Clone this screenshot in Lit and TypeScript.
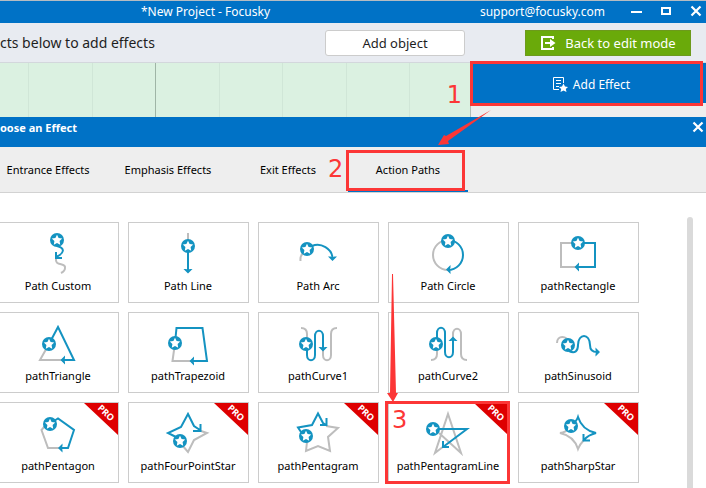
import { LitElement, html, css, svg, TemplateResult, SVGTemplateResult } from "lit";
import { customElement, property } from "lit/decorators.js";
import { classMap } from "lit/directives/class-map.js";

interface Effect {
  name: string;
  rest: string; // part of the path not yet travelled
  move: string; // travelled part of the path
  head: string; // arrow head
  star: [number, number];
  pro?: boolean;
}

const down = (x: number, y: number) => `M${x} ${y}l-4.5-4.5h2.5l2 .8 2-.8h2.5z`;
const left = (x: number, y: number) => `M${x} ${y}l4.5-4.5v2.5l-.8 2 .8 2v2.5z`;
const up = (x: number, y: number) => `M${x} ${y}l-4.5 4.5h2.5l2-.8 2 .8h2.5z`;
const right = (x: number, y: number) => `M${x} ${y}l-4.5-4.5v2.5l.8 2-.8 2v2.5z`;

const EFFECTS: Effect[] = [
  { name: "Path Custom", star: [59, 18], rest: "M58 37C57 45 68 40 67 46C67 49 65 50 63 51", move: "M59 24C67 26 67 31 58 35M58 30V36H64", head: "" },
  { name: "Path Line", star: [60, 24], rest: "M60 11V18", move: "M60 30V49", head: down(60, 51.5) },
  { name: "Path Arc", star: [49, 27], rest: "M42.500 39Q42 34 45 31", move: "M54 24C63 20 74 27 74.500 36", head: down(74.5, 39) },
  { name: "Path Circle", star: [60, 19], rest: "M60 18A15 15 0 0 0 60 48", move: "M60 18A15 15 0 0 1 60 48", head: left(58, 47.5) },
  { name: "pathRectangle", star: [60, 21], rest: "M60 21H43V45H60", move: "M60 21H77V45H60", head: left(56.5, 45) },
  { name: "pathTriangle", star: [51, 32], rest: "M51 32L42 48H65", move: "M51 32L60 15L76 48H65", head: left(62.5, 48) },
  { name: "pathTrapezoid", star: [47, 31], rest: "M47 31L44.500 49H64", move: "M47 31L48.500 16H74.500L79 49H64", head: left(61.5, 49) },
  { name: "pathCurve1", star: [48, 32], rest: "M43 16Q49 16 49 22V27M65 38V43C65 50 73 50 73 43V22Q73 16 79 16", move: "M49 38V43C49 50 57 50 57 43V24C57 17 65 17 65 24V37", head: down(65, 39.5) },
  { name: "pathCurve2", star: [48, 32], rest: "M43 48Q49 48 49 42V38M65 27V22C65 15 73 15 73 22V42Q73 48 79 48", move: "M49 26V21C49 14 57 14 57 21V40C57 47 65 47 65 40V27", head: up(65, 24.5) },
  { name: "pathSinusoid", star: [50, 33], rest: "M39 31C39 23 49 23 51 31", move: "M51 39C57 42 60 39 60 33C60 21 72 21 72 33Q72 40 79 40", head: right(82, 40) },
  { name: "pathPentagon", star: [52, 22], rest: "M47 24L43.500 28L50 46H62", move: "M56 19L60 16.500L76 28L70 46H62", head: left(60, 46), pro: true },
  { name: "pathFourPointStar", star: [52, 39], rest: "M70 28L79 31L66 38L60 50L54 43", move: "M50 36L40 31L53 25L60 12L66 24L72 28M72.500 22V29H65", head: "", pro: true },
  { name: "pathPentagram", star: [48, 34], rest: "M68 24L80 26L70 35L72 49L60 44L48 49L49 40", move: "M43 30L40 25.500L54 23L60 11.500L65 21L68 23M68.500 16V23H62", head: "", pro: true },
  { name: "pathPentagramLine", star: [45, 27], rest: "M51 31L73 51L60 12L47 51L56 44", move: "M51 27H79L55 45M55 39V45H61", head: "", pro: true },
  { name: "pathSharpStar", star: [53, 24], rest: "M49 27Q49 30 42 31Q56 34 60 47Q62 42 66 38", move: "M57 20Q59 18 60 15Q64 28 78 31Q70 33 66 38M65.500 32V38.500H72", head: "", pro: true },
];

const starBadge = (x: number, y: number): SVGTemplateResult => svg`
  <g transform="translate(${x} ${y})">
    <circle r="7" fill="#1493c1"></circle>
    <path fill="#fff" d="M0-5.200L1.600-1.900L5.200-1.400L2.600 1.100L3.200 4.700L0 3L-3.200 4.700L-2.600 1.100L-5.200-1.400L-1.600-1.900Z"></path>
  </g>`;

@customElement("effect-card")
export class EffectCard extends LitElement {
  @property({ attribute: false }) effect!: Effect;
  @property({ type: Number }) step = 0;

  static styles = css`
    :host { display: block; position: relative; }
    .card {
      display: flex; flex-direction: column; align-items: center;
      position: relative; width: 100%; height: 81px; padding: 7px 1px 0 0;
      box-sizing: border-box; border: 1px solid #ccc; background: #fff;
      font: 11px/20px "Noto Sans", sans-serif; color: #000; white-space: nowrap;
    }
    .icon { display: block; width: 60px; height: 46px; flex: none; }
    .ribbon { position: absolute; top: 0; right: 0; width: 34px; height: 32px; }
    .ring { position: absolute; inset: -1px -1px -1px -3px; border: 3px solid #fc3636; pointer-events: none; }
    .step { position: absolute; left: 4px; top: 4px; font: 24px/28px "DejaVu Sans", sans-serif; color: #fc3636; }
  `;

  render(): TemplateResult {
    const e = this.effect;
    return html`
      <button class="card" type="button">
        <svg class="icon" viewBox="30 8 60 46" fill="none" stroke-width="2" aria-hidden="true">
          <path stroke="#bdbdbd" d=${e.rest}></path>
          <path stroke="#1493c1" d=${e.move}></path>
          <path fill="#1493c1" d=${e.head}></path>
          ${starBadge(e.star[0], e.star[1])}
        </svg>
        <span>${e.name}</span>
        ${e.pro
          ? html`<svg class="ribbon" viewBox="0 0 34 32">
              <path fill="#de0000" d="M0 0H34V32Z"></path>
              <text x="22" y="13" transform="rotate(43 22 10)" text-anchor="middle" fill="#fff" font-family="Noto Sans, sans-serif" font-weight="700" font-size="9">PRO</text>
            </svg>`
          : null}
      </button>
      ${this.step ? html`<span class="ring"></span><span class="step">${this.step}</span>` : null}
    `;
  }
}

@customElement("app-root")
export class AppRoot extends LitElement {
  static styles = css`
    :host {
      display: flex; flex-direction: column; position: relative;
      height: 100vh; overflow: hidden; background: #fff; color: #1e1e1e;
      font: 12px/20px "Noto Sans", sans-serif;
    }
    button { font: inherit; color: inherit; margin: 0; padding: 0; border: 0; background: none; white-space: nowrap; }
    svg { display: block; }
    .titlebar {
      display: flex; align-items: center; gap: 10px; height: 23px; box-sizing: border-box; flex: none;
      border-top: 1px solid #b5bcc2; padding-left: 141px; background: #0072c6; color: #fff;
    }
    .title { flex: 1; }
    .mail { color: inherit; text-decoration: none; margin-right: 11px; }
    .win { width: 20px; height: 20px; display: flex; align-items: center; justify-content: center; padding-bottom: 2px; }
    .toolbar {
      display: flex; align-items: center; height: 40px; box-sizing: border-box; flex: none;
      border-bottom: 1px solid #d3d7dc; padding: 1px 15px 0 0; background: #e8ebf1;
    }
    .hint { flex: 1; font-size: 14px; }
    .object { width: 140px; height: 26px; border: 1px solid #ccc; border-radius: 3px; background: #fff; margin-right: 60px; font-size: 13px; }
    .back {
      display: flex; align-items: center; justify-content: center; gap: 9px;
      width: 166px; height: 26px; border: 1px solid #6d9a1c; background: #6aaa0a; color: #fff; font-size: 13px;
    }
    .stage { display: flex; height: 54px; flex: none; }
    .canvas {
      flex: 1; position: relative; border-right: 1px solid #b4bdb6;
      background:
        linear-gradient(#9fb5a6, #9fb5a6) 155px 0 / 1px 100% no-repeat,
        linear-gradient(#d0e6d7, #d0e6d7) 28px 0 / 1px 100% no-repeat,
        linear-gradient(90deg, #d0e6d7 1px, transparent 1px) 28px 0 / 127px 100%,
        linear-gradient(90deg, #d0e6d7 1px, transparent 1px) 92px 0 / 127px 100%,
        #dbf1e1;
    }
    .panel { width: 235px; position: relative; background: #eee; }
    .add {
      display: flex; align-items: center; justify-content: center; gap: 5px;
      width: 100%; height: 40px; padding: 3px 0 0 6px; box-sizing: border-box; background: #0072c6; color: #fff;
    }
    .ring { position: absolute; border: 3px solid #fc3636; pointer-events: none; }
    .panel .ring { inset: -2px 3px 11px -1px; }
    .step { position: absolute; font: 24px/28px "DejaVu Sans", sans-serif; color: #fc3636; }
    .canvas .step { right: 8px; top: 18px; }
    .dialog { display: flex; flex-direction: column; flex: 1; min-height: 0; }
    .bar { display: flex; justify-content: space-between; height: 30px; flex: none; padding-right: 2px; background: #0072c6; color: #fff; }
    .heading { margin: 0; font: 700 11px/22px "Noto Sans", sans-serif; }
    .bar .close { width: 12px; height: 20px; }
    .tabs {
      display: flex; height: 46px; box-sizing: border-box; flex: none;
      margin-left: -12px; background: #eee; border-bottom: 1px solid #d2d2d2; color: #000; font-size: 11px;
    }
    .tab { position: relative; width: 120px; }
    .tab.active { border-bottom: 2px solid #0072c6; padding-top: 2px; }
    .tab .ring { inset: 3px 3px -1px -2px; }
    .tab .step { left: -20px; top: 8px; }
    .body { display: flex; justify-content: space-between; flex: 1; min-height: 0; padding: 24px 13px 0 0; }
    .grid { display: grid; grid-template-columns: repeat(5, 121px); gap: 9px; margin: 5px 0 0 -2px; align-content: start; }
    .scroll { width: 6px; border-radius: 3px 3px 0 0; background: #dadada; }
    .arrows { position: absolute; left: 0; top: 0; pointer-events: none; }
  `;

  render(): TemplateResult {
    const cross = html`<svg width="12" height="12" viewBox="0 0 12 12" aria-hidden="true"><path d="M1.500 1.500L10.500 10.500M10.500 1.500L1.500 10.500" stroke="#fff" stroke-width="2.200"></path></svg>`;
    const tabs = ["Entrance Effects", "Emphasis Effects", "Exit Effects", "Action Paths"];
    return html`
      <header class="titlebar">
        <span class="title">*New Project - Focusky</span>
        <a class="mail" href="mailto:support@focusky.com">support@focusky.com</a>
        <button class="win" type="button" aria-label="Minimize">
          <svg width="12" height="12"><path fill="#fff" d="M1 6H12V8H1Z"></path></svg>
        </button>
        <button class="win" type="button" aria-label="Maximize">
          <svg width="12" height="12"><path fill="none" stroke="#fff" stroke-width="2" d="M2 3H10V9H2Z"></path></svg>
        </button>
        <button class="win" type="button" aria-label="Close">${cross}</button>
      </header>
      <div class="toolbar">
        <span class="hint">cts below to add effects</span>
        <button class="object" type="button">Add object</button>
        <button class="back" type="button">
          <svg width="16" height="16" viewBox="0 0 16 16" aria-hidden="true">
            <path fill="none" stroke="#fff" stroke-width="2" d="M13 4V2H2V14H13V12"></path>
            <path fill="#fff" d="M5 7H10V4L15.500 8L10 12V9H5Z"></path>
          </svg>
          Back to edit mode
        </button>
      </div>
      <div class="stage">
        <div class="canvas"><span class="step">1</span></div>
        <div class="panel">
          <button class="add" type="button">
            <svg width="15" height="16" viewBox="0 0 15 16" aria-hidden="true">
              <path fill="none" stroke="#fff" d="M6 12.500H.500V.500H10.500V6M3 3.500H8M3 6.500H8M3 9.500H6"></path>
              <path fill="#fff" d="M10.500 6.500L12 9.500L15 10L12.800 12L13.500 15L10.500 13.500L7.500 15L8.200 12L6 10L9 9.500Z"></path>
            </svg>
            Add Effect
          </button>
          <span class="ring"></span>
        </div>
      </div>
      <section class="dialog">
        <div class="bar">
          <h1 class="heading">oose an Effect</h1>
          <button class="close" type="button" aria-label="Close dialog">${cross}</button>
        </div>
        <nav class="tabs">
          ${tabs.map(
            (t, i) => html`<button type="button" class=${classMap({ tab: true, active: i === 3 })}>
              ${t}${i === 3 ? html`<span class="ring"></span><span class="step">2</span>` : null}
            </button>`
          )}
        </nav>
        <div class="body">
          <div class="grid">
            ${EFFECTS.map((e) => html`<effect-card .effect=${e} .step=${e.name === "pathPentagramLine" ? 3 : 0}></effect-card>`)}
          </div>
          <div class="scroll"></div>
        </div>
      </section>
      <svg class="arrows" width="500" height="410" viewBox="0 0 500 410" aria-hidden="true">
        <path fill="#fc3636" d="M491 110L446 136L444 135L438 145L449 144L448 141Z"></path>
        <path fill="#fc3636" d="M392 274H393L396 393H398L393 402L387 393H390Z"></path>
      </svg>
    `;
  }
}
